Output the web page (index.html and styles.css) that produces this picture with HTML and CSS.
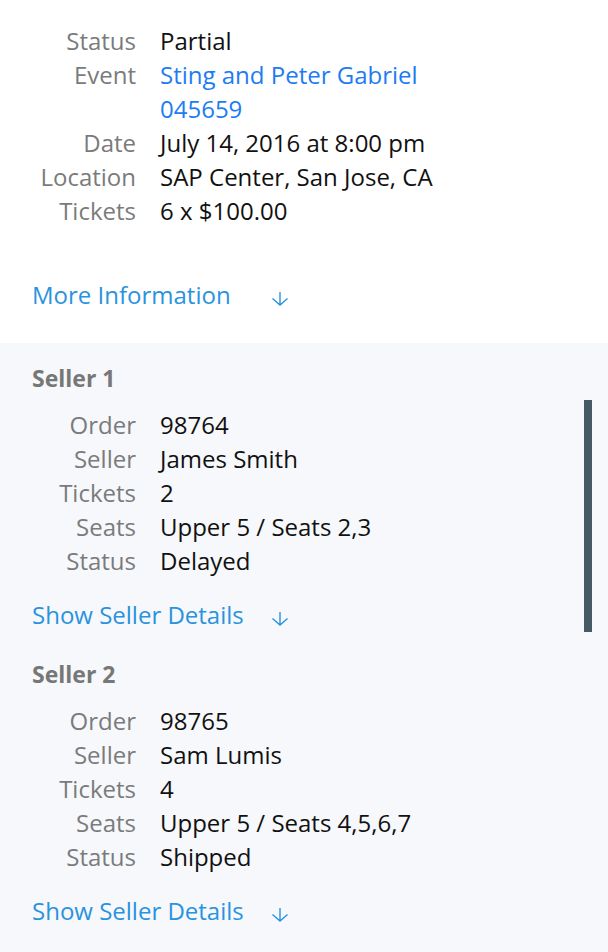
FILE: index.html
```html
<!DOCTYPE html>
<html>
<head>
<meta charset="utf-8">
<link rel="stylesheet" href="styles.css">
</head>
<body>
<div class="page">
  <section class="summary">
    <dl class="grid">
      <dt>Status</dt><dd>Partial</dd>
      <dt>Event</dt><dd><a class="event">Sting and Peter Gabriel<br>045659</a></dd>
      <dt>Date</dt><dd>July 14, 2016 at 8:00 pm</dd>
      <dt>Location</dt><dd>SAP Center, San Jose, CA</dd>
      <dt>Tickets</dt><dd>6 x $100.00</dd>
    </dl>
    <a class="toggle more"><span class="toggle-text">More Information</span><svg class="arrow" width="18" height="15" viewBox="0 0 18 15"><path d="M9 1v13M1.5 7.5L9 14l7.5-6.5" fill="none" stroke="currentColor" stroke-width="1.4"/></svg></a>
  </section>
  <section class="sellers">
    <div class="seller">
      <h3>Seller 1</h3>
      <dl class="grid">
        <dt>Order</dt><dd>98764</dd>
        <dt>Seller</dt><dd>James Smith</dd>
        <dt>Tickets</dt><dd>2</dd>
        <dt>Seats</dt><dd>Upper 5 / Seats 2,3</dd>
        <dt>Status</dt><dd>Delayed</dd>
      </dl>
      <a class="toggle"><span class="toggle-text">Show Seller Details</span><svg class="arrow" width="18" height="15" viewBox="0 0 18 15"><path d="M9 1v13M1.5 7.5L9 14l7.5-6.5" fill="none" stroke="currentColor" stroke-width="1.4"/></svg></a>
    </div>
    <div class="seller">
      <h3>Seller 2</h3>
      <dl class="grid">
        <dt>Order</dt><dd>98765</dd>
        <dt>Seller</dt><dd>Sam Lumis</dd>
        <dt>Tickets</dt><dd>4</dd>
        <dt>Seats</dt><dd>Upper 5 / Seats 4,5,6,7</dd>
        <dt>Status</dt><dd>Shipped</dd>
      </dl>
      <a class="toggle"><span class="toggle-text">Show Seller Details</span><svg class="arrow" width="18" height="15" viewBox="0 0 18 15"><path d="M9 1v13M1.5 7.5L9 14l7.5-6.5" fill="none" stroke="currentColor" stroke-width="1.4"/></svg></a>
    </div>
    <div class="scrollbar"></div>
  </section>
</div>
</body>
</html>
```
FILE: styles.css
```css
html, body {
  margin: 0;
  padding: 0;
  background: #f6f8fb;
}
body {
  font-family: "Open Sans", "Liberation Sans", sans-serif;
  font-size: 24px;
  line-height: 34px;
  color: #111;
}
.page {
  width: 608px;
}
.summary {
  background: #fff;
  padding: 24px 0 31px 32px;
}
.grid {
  display: grid;
  grid-template-columns: 104px auto;
  column-gap: 24px;
  margin: 0;
}
.grid dt {
  text-align: right;
  color: #7b7b7b;
}
.grid dd {
  margin: 0;
}
.event {
  color: #1d7cf2;
}
.toggle {
  display: flex;
  align-items: center;
  color: #2a93de;
  height: 34px;
}
.toggle-text {
  width: 239px;
}
.more {
  margin-top: 50px;
}
.arrow {
  display: block;
  margin-top: 6px;
}
.sellers {
  position: relative;
  padding: 18px 0 24px 32px;
}
.seller + .seller {
  margin-top: 25px;
}
.seller h3 {
  margin: 0 0 13px;
  font-size: 23px;
  line-height: 34px;
  font-weight: 700;
  color: #777;
}
.seller .toggle {
  margin-top: 20px;
}
.scrollbar {
  position: absolute;
  left: 584px;
  top: 57px;
  width: 8px;
  height: 232px;
  background: #455a64;
}
```
